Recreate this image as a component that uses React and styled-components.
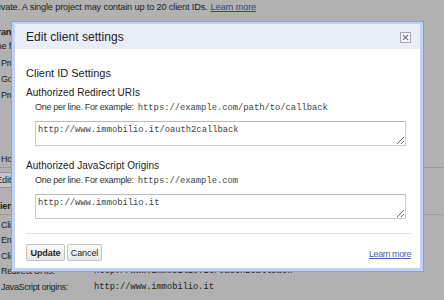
import React from "react";
import styled, { createGlobalStyle } from "styled-components";

const Global = createGlobalStyle`
  html, body { margin: 0; padding: 0; }
  body {
    background: #b1b1b1;
    font-family: "Liberation Sans", Arial, sans-serif;
    overflow: hidden;
  }
`;

const Screen = styled.div`
  position: relative;
  width: 444px;
  height: 300px;
  overflow: hidden;
  background: #b1b1b1;
`;

/* ---------- background page (dimmed) ---------- */
const Page = styled.div`
  display: flex;
  flex-direction: column;
  margin-left: -9px;
  color: #1c1c1c;
  font-size: 9.2px;
  letter-spacing: -0.15px;
`;

const TopLine = styled.div`
  line-height: 14px;
  white-space: nowrap;
`;

const PageLink = styled.a`
  color: #33478f;
  text-decoration: underline;
  margin-left: 3px;
`;

const SectionTitle = styled.div`
  font-weight: bold;
  line-height: 14px;
  margin-top: ${(p) => p.$mt || 0}px;
  white-space: nowrap;
  ${(p) => p.$rule && `border-bottom: 1px solid #9a9a9a; padding-bottom: 1px;`}
`;

const Desc = styled.div`
  line-height: 14px;
  white-space: nowrap;
`;

const Rows = styled.div`
  display: flex;
  flex-direction: column;
  margin-top: ${(p) => p.$mt || 0}px;
  ${(p) => p.$rule && `border-bottom: 1px solid #9a9a9a;`}
`;

const Row = styled.div`
  display: grid;
  grid-template-columns: 93px 1fr;
  padding-left: 10px;
  height: ${(p) => p.$lh || 16}px;
  line-height: ${(p) => p.$lh || 16}px;
  white-space: nowrap;
  letter-spacing: -0.35px;
  font-size: 9px;
`;

const Mono = styled.span`
  font-family: "Liberation Mono", "Courier New", monospace;
  font-size: 8.7px;
  letter-spacing: 0;
`;

const PageButton = styled.div`
  align-self: flex-start;
  margin-top: 4px;
  height: 16px;
  line-height: 14px;
  box-sizing: border-box;
  padding: 0 6px 0 4px;
  border: 1px solid #8e8e8e;
  border-radius: 2px;
  background: #c4c4c4;
  white-space: nowrap;
`;

/* ---------- dialog ---------- */
const Dialog = styled.div`
  position: absolute;
  left: 11px;
  top: 21px;
  width: 413px;
  height: 251px;
  box-sizing: border-box;
  border: 1px solid #8d9fd2;
  display: flex;
`;

const Frame = styled.div`
  flex: 1;
  display: flex;
  flex-direction: column;
  border: 3px solid #c4d1f6;
  border-top-width: 2px;
  background: #ffffff;
`;

const Header = styled.div`
  height: 25px;
  flex: none;
  display: flex;
  align-items: center;
  justify-content: space-between;
  padding: 0 9px 0 11px;
  background: #e9edf8;
`;

const Title = styled.div`
  font-size: 12px;
  color: #222;
  letter-spacing: 0.05px;
`;

const CloseBox = styled.div`
  width: 11px;
  height: 11px;
  display: flex;
  margin-top: 1px;
`;

const Body = styled.div`
  display: flex;
  flex-direction: column;
  padding: 0 9px 0 11px;
`;

const SectionHead = styled.div`
  font-size: 11px;
  line-height: 14px;
  color: #222;
  margin-top: 17px;
`;

const FieldLabel = styled.div`
  font-size: 10px;
  line-height: 13px;
  color: #222;
  letter-spacing: 0.05px;
  margin-top: ${(p) => p.$mt}px;
`;

const Hint = styled.div`
  font-size: 9px;
  line-height: 12px;
  color: #333;
  letter-spacing: -0.3px;
  margin: 2px 0 0 9px;
  white-space: nowrap;
`;

const HintCode = styled.span`
  font-family: "Liberation Mono", "Courier New", monospace;
  font-size: 8.8px;
  letter-spacing: 0;
  color: #444;
  margin-left: 4px;
`;

const Area = styled.textarea`
  display: block;
  margin: 7px 0 0 9px;
  width: 371px;
  height: 25px;
  box-sizing: border-box;
  padding: 3px 2px;
  border: 1px solid #c9c9c9;
  border-top-color: #b9b9b9;
  border-radius: 0;
  font-family: "Liberation Mono", "Courier New", monospace;
  font-size: 8.8px;
  line-height: 11px;
  color: #444;
  background: #fff;
  overflow: hidden;
  outline: none;
`;

const Divider = styled.div`
  height: 1px;
  background: #e2e2e2;
  margin-top: 14px;
`;

const Footer = styled.div`
  display: flex;
  align-items: center;
  justify-content: space-between;
  margin-top: 10px;
`;

const Buttons = styled.div`
  display: flex;
  gap: 2px;
`;

const Btn = styled.button`
  height: 17px;
  width: ${(p) => p.$w}px;
  box-sizing: border-box;
  padding: 0;
  border: 1px solid #c4c4c4;
  border-radius: 2px;
  background: linear-gradient(#fbfbfb, #e8e8e8);
  font-family: "Liberation Sans", Arial, sans-serif;
  font-size: 9px;
  font-weight: ${(p) => (p.$primary ? "bold" : "normal")};
  color: #222;
  letter-spacing: -0.1px;
  cursor: default;
`;

const Learn = styled.a`
  font-size: 9px;
  letter-spacing: -0.4px;
  color: #4563b4;
  text-decoration: underline;
  margin-top: 3px;
`;

const CloseIcon = () => (
  <svg width="11" height="11" viewBox="0 0 11 11">
    <rect x="0.5" y="0.5" width="10" height="10" fill="#f7f8fb" stroke="#a3a7b3" />
    <path d="M3 3 L8 8 M8 3 L3 8" stroke="#7f838f" strokeWidth="1.3" />
  </svg>
);

export default function App() {
  return (
    <>
      <Global />
      <Screen>
        <Page>
          <TopLine>
            private. A single project may contain up to 20 client IDs.
            <PageLink>Learn more</PageLink>
          </TopLine>
          <SectionTitle $mt={11}>Branding information</SectionTitle>
          <Desc>The following information is shown to users whenever you request access</Desc>
          <Rows $mt={2} $rule>
            <Row><span>Product name:</span><span /></Row>
            <Row><span>Google account:</span><span /></Row>
            <Row><span>Product logo:</span><span /></Row>
            <Row><span /><span /></Row>
            <Row><span /><span /></Row>
            <Row><span /><span /></Row>
            <Row><span>Home page URL:</span><span /></Row>
          </Rows>
          <PageButton>Edit branding information…</PageButton>
          <SectionTitle $mt={11} $rule>Client ID for web applications</SectionTitle>
          <Rows $mt={3}>
            <Row $lh={15.4}><span>Client ID:</span><Mono>123456789.apps.googleusercontent.com</Mono></Row>
            <Row $lh={15.4}><span>Email address:</span><Mono>123456789@developer.gserviceaccount.com</Mono></Row>
            <Row $lh={15.4}><span>Client secret:</span><Mono>xxxxxxxxxxxxxxxxxxxx</Mono></Row>
            <Row $lh={15.4}><span>Redirect URIs:</span><Mono>http://www.immobilio.it/oauth2callback</Mono></Row>
            <Row $lh={15.4}><span>JavaScript origins:</span><Mono>http://www.immobilio.it</Mono></Row>
          </Rows>
        </Page>

        <Dialog>
          <Frame>
            <Header>
              <Title>Edit client settings</Title>
              <CloseBox><CloseIcon /></CloseBox>
            </Header>
            <Body>
              <SectionHead>Client ID Settings</SectionHead>
              <FieldLabel $mt={6}>Authorized Redirect URIs</FieldLabel>
              <Hint>
                One per line. For example:
                <HintCode>https://example.com/path/to/callback</HintCode>
              </Hint>
              <Area defaultValue="http://www.immobilio.it/oauth2callback" spellCheck={false} />
              <FieldLabel $mt={13}>Authorized JavaScript Origins</FieldLabel>
              <Hint>
                One per line. For example:
                <HintCode>https://example.com</HintCode>
              </Hint>
              <Area defaultValue="http://www.immobilio.it" spellCheck={false} />
              <Divider />
              <Footer>
                <Buttons>
                  <Btn $primary $w={39}>Update</Btn>
                  <Btn $w={35}>Cancel</Btn>
                </Buttons>
                <Learn>Learn more</Learn>
              </Footer>
            </Body>
          </Frame>
        </Dialog>
      </Screen>
    </>
  );
}
